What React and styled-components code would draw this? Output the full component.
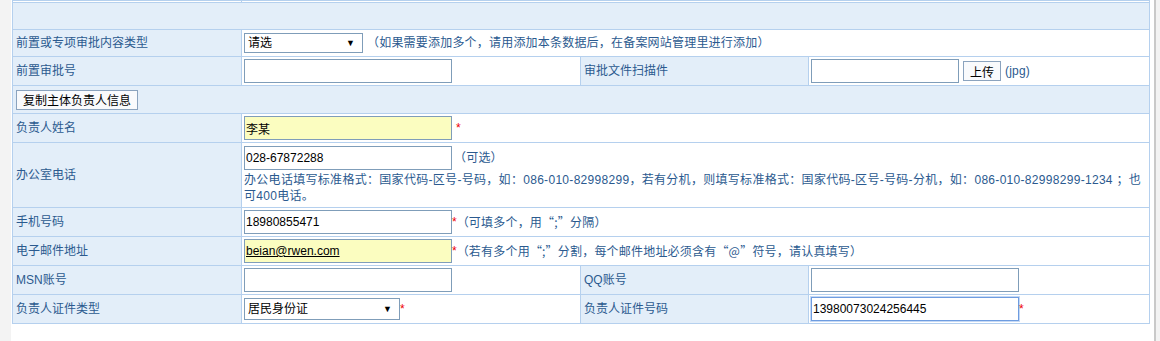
import styled, { createGlobalStyle } from "styled-components";

const Global = createGlobalStyle`
  html, body {
    margin: 0;
    padding: 0;
    background: #f3f3f3;
  }
  body {
    font-family: "Liberation Sans", "Noto Sans CJK SC", sans-serif;
    font-size: 12px;
  }
`;

const Frame = styled.div`
  margin-left: 11px;
  width: 1145px;
  min-height: 341px;
  background: #fff;
  padding-left: 1px;
  border-right: 2px solid #c9c9c9;
  box-sizing: border-box;
`;

const Table = styled.table`
  width: 1137px;
  table-layout: fixed;
  border-collapse: collapse;
  border: 1px solid #b5d0ee;
`;

const Cell = styled.td`
  border: 1px solid #b5d0ee;
  height: ${(p) => (p.$h !== undefined ? p.$h : 28)}px;
  padding: ${(p) => (p.$pad ? p.$pad : "0 2px")};
  vertical-align: middle;
  background: #fff;
  color: #2b5a8f;
  white-space: nowrap;
  line-height: 16px;
`;

const CutCell = styled.td`
  border: 1px solid #b5d0ee;
  height: 1px;
  padding: 0;
  font-size: 0;
  line-height: 0;
  background: #fff;
`;

const Label = styled(Cell)`
  background: #e3eef9;
  padding: 0 3px;
`;

const TextInput = styled.input`
  box-sizing: border-box;
  width: ${(p) => p.$w || 208}px;
  height: 24px;
  margin: 0;
  padding: 0 1px;
  border: 1px solid ${(p) => (p.$focus ? "#6e9ce0" : "#7f9db9")};
  box-shadow: ${(p) => (p.$focus ? "0 0 0 1px #c5d9f5" : "none")};
  background: ${(p) => (p.$warn ? "#fbfdc0" : "#fff")};
  font-family: "Liberation Sans", "Noto Sans CJK SC", sans-serif;
  font-size: 12px;
  color: #000;
  text-decoration: ${(p) => (p.$underline ? "underline" : "none")};
  vertical-align: middle;
  outline: none;
`;

const SelectWrap = styled.span`
  position: relative;
  display: inline-block;
  vertical-align: middle;
  &::after {
    content: "▼";
    position: absolute;
    right: 8px;
    top: 50%;
    transform: translateY(-50%);
    font-size: 9px;
    color: #000;
    pointer-events: none;
  }
`;

const Select = styled.select`
  appearance: none;
  -webkit-appearance: none;
  box-sizing: border-box;
  width: ${(p) => p.$w}px;
  height: ${(p) => p.$h || 20}px;
  margin: 0;
  padding: 0 3px;
  border: 1px solid #7f9db9;
  border-radius: 0;
  background: #fff;
  font-family: "Liberation Sans", "Noto Sans CJK SC", sans-serif;
  font-size: 12px;
  color: #000;
  display: block;
`;

const Button = styled.button`
  box-sizing: border-box;
  height: ${(p) => p.$h || 20}px;
  margin: 0 ${(p) => p.$mr || 0}px 0 ${(p) => p.$ml || 0}px;
  padding: 0 6px;
  border: 1px solid #8ba3be;
  background: #f9fafc;
  font-family: "Liberation Sans", "Noto Sans CJK SC", sans-serif;
  font-size: 12px;
  color: #000;
  vertical-align: middle;
`;

const Star = styled.span`
  color: #e00;
  margin-left: ${(p) => p.$gap || 0}px;
  vertical-align: middle;
`;

const Hint = styled.span`
  color: #2b5a8f;
  margin-left: ${(p) => p.$gap || 0}px;
  vertical-align: middle;
  letter-spacing: 0.2px;
`;

const Q = styled.span`
  font-family: "Noto Sans CJK SC", sans-serif;
`;

const Note = styled.div`
  margin-top: 2px;
  white-space: normal;
  color: #2b5a8f;
  line-height: 16px;
  letter-spacing: 0.3px;
`;

const Keep = styled.span`
  white-space: nowrap;
`;

export default function App() {
  return (
    <>
      <Global />
      <Frame>
        <Table>
          <colgroup>
            <col style={{ width: 229 }} />
            <col style={{ width: 339 }} />
            <col style={{ width: 228 }} />
            <col style={{ width: 341 }} />
          </colgroup>
          <tbody>
            <tr>
              <CutCell />
              <CutCell colSpan={3} />
            </tr>
            <tr>
              <Label colSpan={4} $h={26} />
            </tr>
            <tr>
              <Label $h={26}>前置或专项审批内容类型</Label>
              <Cell colSpan={3} $h={26}>
                <SelectWrap>
                  <Select $w={119} defaultValue="0">
                    <option value="0">请选</option>
                  </Select>
                </SelectWrap>
                <Hint $gap={4}>（如果需要添加多个，请用添加本条数据后，在备案网站管理里进行添加）</Hint>
              </Cell>
            </tr>
            <tr>
              <Label>前置审批号</Label>
              <Cell>
                <TextInput />
              </Cell>
              <Label>审批文件扫描件</Label>
              <Cell>
                <TextInput $w={148} />
                <Button $ml={4} $mr={4}>上传</Button>
                <Hint>(jpg)</Hint>
              </Cell>
            </tr>
            <tr>
              <Label colSpan={4} $h={27}>
                <Button>复制主体负责人信息</Button>
              </Label>
            </tr>
            <tr>
              <Label>负责人姓名</Label>
              <Cell colSpan={3}>
                <TextInput $warn defaultValue="李某" />
                <Star $gap={4}>*</Star>
              </Cell>
            </tr>
            <tr>
              <Label $h={59}>办公室电话</Label>
              <Cell colSpan={3} $h={59} $pad="2px 2px 3px">
                <TextInput defaultValue="028-67872288" />
                <Hint $gap={2}>（可选）</Hint>
                <Note>
                  办公电话填写标准格式：国家代码-区号-号码，如：086-010-82998299，若有分机，则填写标准格式：国家代码-区号-号码-分机，如：086-010-82998299-1234 <Keep>；也</Keep>可400电话。
                </Note>
              </Cell>
            </tr>
            <tr>
              <Label>手机号码</Label>
              <Cell colSpan={3}>
                <TextInput defaultValue="18980855471" />
                <Star>*</Star>
                <Hint>（可填多个，用<Q>“;”</Q>分隔）</Hint>
              </Cell>
            </tr>
            <tr>
              <Label>电子邮件地址</Label>
              <Cell colSpan={3}>
                <TextInput $warn $underline defaultValue="beian@rwen.com" />
                <Star>*</Star>
                <Hint>（若有多个用<Q>“;”</Q>分割，每个邮件地址必须含有<Q>“@”</Q>符号，请认真填写）</Hint>
              </Cell>
            </tr>
            <tr>
              <Label>MSN账号</Label>
              <Cell>
                <TextInput />
              </Cell>
              <Label>QQ账号</Label>
              <Cell>
                <TextInput />
              </Cell>
            </tr>
            <tr>
              <Label>负责人证件类型</Label>
              <Cell>
                <SelectWrap>
                  <Select $w={156} $h={22} defaultValue="1">
                    <option value="1">居民身份证</option>
                  </Select>
                </SelectWrap>
                <Star>*</Star>
              </Cell>
              <Label>负责人证件号码</Label>
              <Cell>
                <TextInput $focus defaultValue="13980073024256445" />
                <Star>*</Star>
              </Cell>
            </tr>
          </tbody>
        </Table>
      </Frame>
    </>
  );
}
